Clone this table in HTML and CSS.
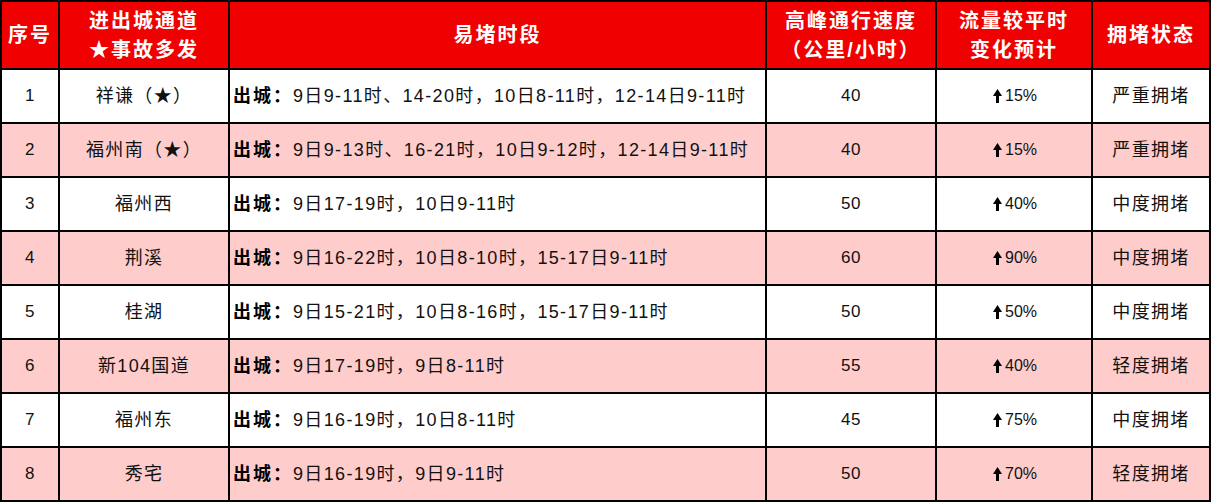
FILE: index.html
```html
<!DOCTYPE html>
<html lang="zh">
<head>
<meta charset="utf-8">
<link rel="stylesheet" href="styles.css">
</head>
<body>
<table class="grid">
  <colgroup>
    <col class="c1"><col class="c2"><col class="c3"><col class="c4"><col class="c5"><col class="c6">
  </colgroup>
  <thead>
    <tr class="head">
      <th>序号</th>
      <th>进出城通道<br>★事故多发</th>
      <th>易堵时段</th>
      <th>高峰通行速度<br>（公里/小时）</th>
      <th>流量较平时<br>变化预计</th>
      <th>拥堵状态</th>
    </tr>
  </thead>
  <tbody>
    <tr>
      <td class="num">1</td><td>祥谦（★）</td>
      <td class="time"><b>出城：</b>9日9-11时、14-20时，10日8-11时，12-14日9-11时</td>
      <td class="num">40</td>
      <td><span class="chg"><svg class="up" viewBox="0 0 9 14"><polygon points="0,7 4.5,0 9,7"/><rect x="3" y="5" width="3" height="9"/></svg>15%</span></td>
      <td>严重拥堵</td>
    </tr>
    <tr class="alt">
      <td class="num">2</td><td>福州南（★）</td>
      <td class="time"><b>出城：</b>9日9-13时、16-21时，10日9-12时，12-14日9-11时</td>
      <td class="num">40</td>
      <td><span class="chg"><svg class="up" viewBox="0 0 9 14"><polygon points="0,7 4.5,0 9,7"/><rect x="3" y="5" width="3" height="9"/></svg>15%</span></td>
      <td>严重拥堵</td>
    </tr>
    <tr>
      <td class="num">3</td><td>福州西</td>
      <td class="time"><b>出城：</b>9日17-19时，10日9-11时</td>
      <td class="num">50</td>
      <td><span class="chg"><svg class="up" viewBox="0 0 9 14"><polygon points="0,7 4.5,0 9,7"/><rect x="3" y="5" width="3" height="9"/></svg>40%</span></td>
      <td>中度拥堵</td>
    </tr>
    <tr class="alt">
      <td class="num">4</td><td>荆溪</td>
      <td class="time"><b>出城：</b>9日16-22时，10日8-10时，15-17日9-11时</td>
      <td class="num">60</td>
      <td><span class="chg"><svg class="up" viewBox="0 0 9 14"><polygon points="0,7 4.5,0 9,7"/><rect x="3" y="5" width="3" height="9"/></svg>90%</span></td>
      <td>中度拥堵</td>
    </tr>
    <tr>
      <td class="num">5</td><td>桂湖</td>
      <td class="time"><b>出城：</b>9日15-21时，10日8-16时，15-17日9-11时</td>
      <td class="num">50</td>
      <td><span class="chg"><svg class="up" viewBox="0 0 9 14"><polygon points="0,7 4.5,0 9,7"/><rect x="3" y="5" width="3" height="9"/></svg>50%</span></td>
      <td>中度拥堵</td>
    </tr>
    <tr class="alt">
      <td class="num">6</td><td>新104国道</td>
      <td class="time"><b>出城：</b>9日17-19时，9日8-11时</td>
      <td class="num">55</td>
      <td><span class="chg"><svg class="up" viewBox="0 0 9 14"><polygon points="0,7 4.5,0 9,7"/><rect x="3" y="5" width="3" height="9"/></svg>40%</span></td>
      <td>轻度拥堵</td>
    </tr>
    <tr>
      <td class="num">7</td><td>福州东</td>
      <td class="time"><b>出城：</b>9日16-19时，10日8-11时</td>
      <td class="num">45</td>
      <td><span class="chg"><svg class="up" viewBox="0 0 9 14"><polygon points="0,7 4.5,0 9,7"/><rect x="3" y="5" width="3" height="9"/></svg>75%</span></td>
      <td>中度拥堵</td>
    </tr>
    <tr class="alt">
      <td class="num">8</td><td>秀宅</td>
      <td class="time"><b>出城：</b>9日16-19时，9日9-11时</td>
      <td class="num">50</td>
      <td><span class="chg"><svg class="up" viewBox="0 0 9 14"><polygon points="0,7 4.5,0 9,7"/><rect x="3" y="5" width="3" height="9"/></svg>70%</span></td>
      <td>轻度拥堵</td>
    </tr>
  </tbody>
</table>
</body>
</html>
```
FILE: styles.css
```css
html, body {
  margin: 0;
  padding: 0;
  background: #ffffff;
}
.grid {
  border-collapse: separate;
  border-spacing: 0;
  table-layout: fixed;
  width: 1211px;
  border-left: 2px solid #000;
  border-top: 2px solid #000;
  font-family: "Liberation Sans", "Noto Sans CJK SC", sans-serif;
  color: #111;
}
.c1 { width: 58px; }
.c2 { width: 170px; }
.c3 { width: 537px; }
.c4 { width: 170px; }
.c5 { width: 156px; }
.c6 { width: 118px; }
.grid th, .grid td {
  box-sizing: border-box;
  border-right: 2px solid #000;
  border-bottom: 2px solid #000;
  padding: 0;
  text-align: center;
  vertical-align: middle;
}
.head th {
  height: 68px;
  background: #f00000;
  color: #ffffff;
  font-weight: bold;
  font-size: 20px;
  letter-spacing: 2px;
  line-height: 29px;
  padding-top: 1px;
}
.grid td {
  height: 54px;
  font-size: 18px;
  letter-spacing: 1.35px;
  line-height: 24px;
}
.grid td.num {
  font-size: 17px;
  letter-spacing: 0.5px;
}
.grid td.time {
  text-align: left;
  padding-left: 3px;
  white-space: nowrap;
}
.time b {
  font-weight: bold;
  color: #000;
  letter-spacing: 2px;
}
.alt td {
  background: #ffcccc;
}
.chg {
  display: inline-flex;
  align-items: center;
  gap: 3px;
  font-size: 16px;
  letter-spacing: 0;
  margin-left: 2px;
}
.up {
  width: 9px;
  height: 14px;
  fill: #000;
}
```
